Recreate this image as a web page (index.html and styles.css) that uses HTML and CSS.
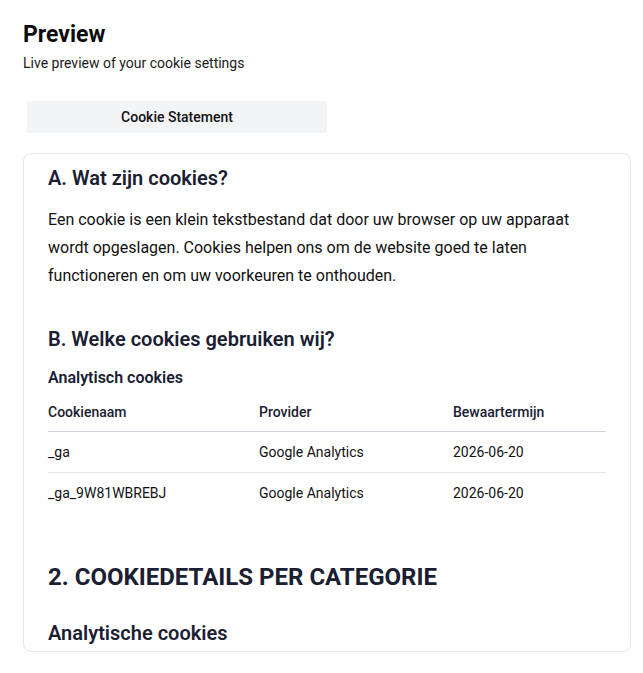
FILE: index.html
```html
<!DOCTYPE html>
<html lang="nl">
<head>
<meta charset="utf-8">
<title>Preview</title>
<link rel="stylesheet" href="styles.css">
</head>
<body>
<div class="page">
  <header class="intro">
    <h1 class="title">Preview</h1>
    <p class="subtitle">Live preview of your cookie settings</p>
  </header>
  <div class="tabs">
    <button class="tab">Cookie Statement</button>
  </div>
  <section class="card">
    <h2 class="h-section">A. Wat zijn cookies?</h2>
    <p class="body-text">Een cookie is een klein tekstbestand dat door uw browser op uw apparaat wordt opgeslagen. Cookies helpen ons om de website goed te laten functioneren en om uw voorkeuren te onthouden.</p>
    <h2 class="h-section h-b">B. Welke cookies gebruiken wij?</h2>
    <h3 class="h-sub">Analytisch cookies</h3>
    <table class="cookie-table">
      <thead>
        <tr><th class="c1">Cookienaam</th><th class="c2">Provider</th><th class="c3">Bewaartermijn</th></tr>
      </thead>
      <tbody>
        <tr><td>_ga</td><td>Google Analytics</td><td>2026-06-20</td></tr>
        <tr><td>_ga_9W81WBREBJ</td><td>Google Analytics</td><td>2026-06-20</td></tr>
      </tbody>
    </table>
    <h2 class="h-big">2. COOKIEDETAILS PER CATEGORIE</h2>
    <h3 class="h-cat">Analytische cookies</h3>
  </section>
</div>
</body>
</html>
```

FILE: styles.css
```css
* { box-sizing: border-box; }
html, body { margin: 0; padding: 0; background: #ffffff; }
body { font-family: Roboto, "Liberation Sans", Arial, sans-serif; color: #111111; }
.page { padding: 20px 12px 0 23px; }
.title { margin: 0; font-size: 23px; font-weight: 700; line-height: 30px; color: #0b0b0b; }
.subtitle { margin: 4px 0 0; font-size: 14px; line-height: 18px; color: #1a1a1a; }
.tabs { margin-top: 29px; padding-left: 4px; }
.tab {
  display: block; width: 300px; height: 32px; border: 0; border-radius: 2px;
  background: #f3f4f6; font-family: inherit; font-size: 14px; font-weight: 500; color: #111111;
}
.card {
  margin-top: 20px; height: 499px; overflow: hidden;
  border: 1px solid #e5e7eb; border-radius: 8px; padding: 10px 24px 0;
  width: 608px;
}
.h-section { margin: 0; font-size: 20px; font-weight: 600; line-height: 28px; color: #1a2032; }
.body-text { margin: 14px 0 0; font-size: 16px; line-height: 28px; color: #111111; }
.h-b { margin-top: 35px; }
.h-sub { margin: 13px 0 0; font-size: 16px; font-weight: 600; line-height: 24px; color: #1a2032; }
.cookie-table { margin-top: 12px; width: 100%; border-collapse: collapse; font-size: 14px; line-height: 20px; }
.cookie-table th { text-align: left; font-weight: 500; color: #1a2032; padding: 0 0 9px; border-bottom: 1px solid #d1d5db; }
.cookie-table td { padding: 10px 0; border-bottom: 1px solid #e5e7eb; color: #111111; }
.cookie-table tbody tr:last-child td { border-bottom: 0; }
.c1 { width: 211px; }
.c2 { width: 194px; }
.h-big { margin: 48px 0 0; font-size: 24px; font-weight: 700; line-height: 32px; color: #1a2032; }
.h-cat { margin: 26px 0 0; font-size: 20px; font-weight: 600; line-height: 28px; color: #1a2032; }
```
